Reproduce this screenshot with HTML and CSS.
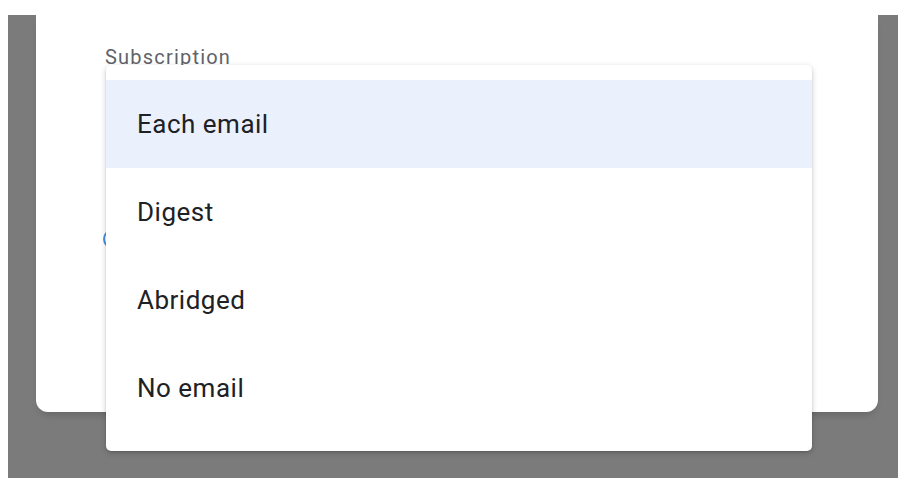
FILE: index.html
```html
<!DOCTYPE html>
<html>
<head>
<meta charset="utf-8">
<link rel="stylesheet" href="styles.css">
</head>
<body>
<div class="scrim">
  <div class="dialog">
    <div class="field">
      <div class="label">Subscription</div>
      <div class="select"></div>
    </div>
    <div class="radio-row">
      <span class="radio"></span>
    </div>
    <ul class="menu">
      <li class="item active">Each email</li>
      <li class="item">Digest</li>
      <li class="item">Abridged</li>
      <li class="item">No email</li>
    </ul>
  </div>
</div>
</body>
</html>
```

FILE: styles.css
```css
html, body {
  margin: 0;
  padding: 0;
  background: #ffffff;
  font-family: Roboto, "Liberation Sans", sans-serif;
}

.scrim {
  margin: 15px 8px 0 8px;
  height: 463px;
  background: #7b7b7b;
  padding: 0 20px 0 28px;
}

.dialog {
  position: relative;
  height: 397px;
  background: #ffffff;
  border-radius: 0 0 12px 12px;
  box-shadow: 0 6px 8px -4px rgba(0, 0, 0, 0.2);
  padding: 30px 0 0 69px;
  box-sizing: border-box;
}

.label {
  font-size: 20px;
  line-height: 24px;
  letter-spacing: 1.2px;
  color: #5f6368;
}

.select {
  height: 56px;
  margin-top: 8px;
  margin-right: 80px;
}

.radio-row {
  margin-top: 96px;
  margin-left: -2px;
  height: 20px;
}

.radio {
  display: block;
  width: 16px;
  height: 16px;
  border: 2px solid #4a8fe7;
  border-radius: 50%;
}

.menu {
  position: absolute;
  left: 70px;
  top: 50px;
  width: 706px;
  margin: 0;
  padding: 15px 0 19px 0;
  list-style: none;
  background: #ffffff;
  border-radius: 5px;
  box-shadow: 0 2px 6px rgba(0, 0, 0, 0.18), 0 1px 2px rgba(0, 0, 0, 0.14);
}

.item {
  height: 88px;
  display: flex;
  align-items: center;
  padding-left: 31px;
  font-size: 26px;
  letter-spacing: 0.5px;
  color: #202124;
}

.item.active {
  background: #eaf1fd;
}
```
